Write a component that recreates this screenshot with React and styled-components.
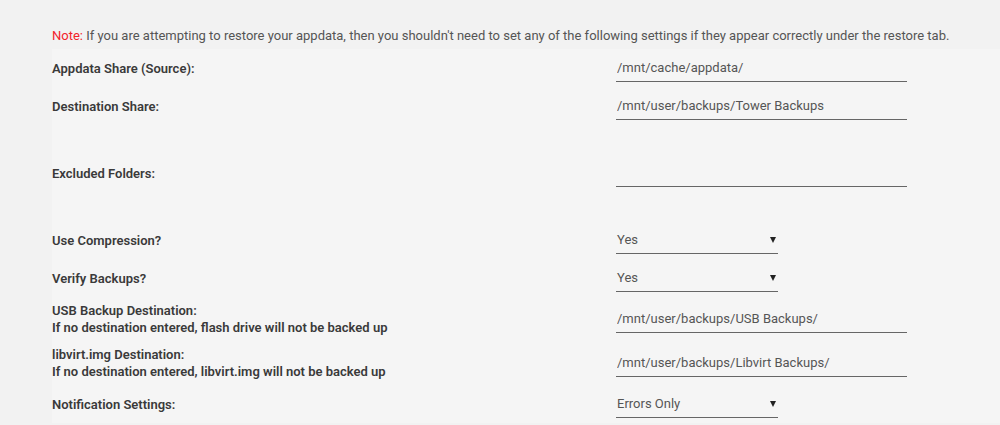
import React from 'react'
import styled, { createGlobalStyle } from 'styled-components'

const GlobalStyle = createGlobalStyle`
  body {
    margin: 0;
    background: #f2f2f2;
    font-family: Roboto, 'Noto Sans', sans-serif;
    color: #444;
  }
`

const settings = [
  { label: 'Appdata Share (Source):', type: 'text', value: '/mnt/cache/appdata/' },
  { label: 'Destination Share:', type: 'text', value: '/mnt/user/backups/Tower Backups' },
  { label: 'Excluded Folders:', type: 'text', value: '', tall: true },
  { label: 'Use Compression?', type: 'select', value: 'Yes' },
  { label: 'Verify Backups?', type: 'select', value: 'Yes' },
  {
    label: 'USB Backup Destination:',
    hint: 'If no destination entered, flash drive will not be backed up',
    type: 'text',
    value: '/mnt/user/backups/USB Backups/',
  },
  {
    label: 'libvirt.img Destination:',
    hint: 'If no destination entered, libvirt.img will not be backed up',
    type: 'text',
    value: '/mnt/user/backups/Libvirt Backups/',
  },
  { label: 'Notification Settings:', type: 'select', value: 'Errors Only' },
]

const App = () => {
  return (
    <>
      <GlobalStyle />
      <Page>
        <Note>
          <NoteTag>Note:</NoteTag> If you are attempting to restore your appdata, then you
          shouldn't need to set any of the following settings if they appear correctly under the
          restore tab.
        </Note>
        <Panel>
          {settings.map(item => (
            <Row key={item.label} $tall={item.tall}>
              <Label>
                {item.label}
                {item.hint && <Hint>{item.hint}</Hint>}
              </Label>
              {item.type === 'select' ? (
                <Select>
                  <span>{item.value}</span>
                  <Caret />
                </Select>
              ) : (
                <TextInput type="text" defaultValue={item.value} />
              )}
            </Row>
          ))}
        </Panel>
      </Page>
    </>
  )
}

export default App

const Page = styled.div`
  padding: 23px 0 0 52px;
`

const Note = styled.div`
  height: 26px;
  line-height: 26px;
  font-size: 13px;
  color: #555;
  white-space: nowrap;
`

const NoteTag = styled.span`
  color: #f2232b;
`

const Panel = styled.div`
  background: #f5f5f5;
`

const Row = styled.div`
  display: grid;
  grid-template-columns: 564px 1fr;
  align-items: center;
  padding: 5px 0;
  min-height: ${p => (p.$tall ? '86px' : '28px')};
  box-sizing: content-box;
`

const Label = styled.div`
  font-size: 13px;
  font-weight: 600;
  line-height: 17px;
  color: #3a3a3a;
`

const Hint = styled.div``

const TextInput = styled.input`
  width: 291px;
  height: 28px;
  box-sizing: border-box;
  padding: 0 1px;
  border: none;
  border-bottom: 1px solid #666;
  background: transparent;
  font-family: inherit;
  font-size: 13px;
  color: #555;
  outline: none;
`

const Select = styled.div`
  width: 162px;
  height: 28px;
  box-sizing: border-box;
  padding: 0 2px 0 1px;
  display: flex;
  align-items: center;
  justify-content: space-between;
  border-bottom: 1px solid #666;
  font-size: 13px;
  color: #555;
`

const Caret = styled.span`
  width: 0;
  height: 0;
  border-left: 3.5px solid transparent;
  border-right: 3.5px solid transparent;
  border-top: 6px solid #222;
`
